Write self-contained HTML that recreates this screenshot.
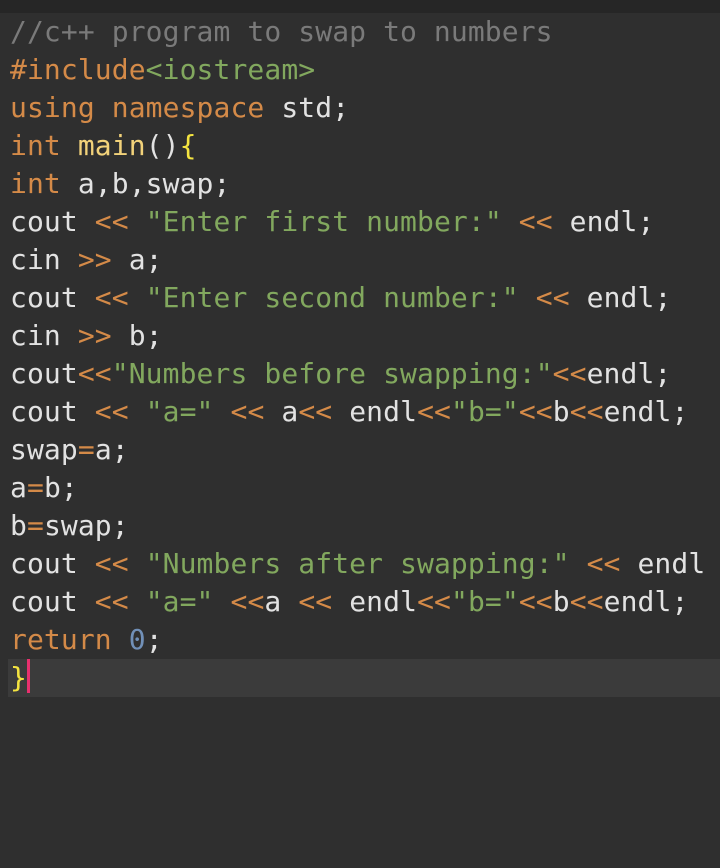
<!DOCTYPE html>
<html><head><style>
html,body{margin:0;padding:0;width:720px;height:868px;overflow:hidden;background:#2f2f2f}
.top{height:13px;background:#262626}
pre{margin:0;padding:0 0 0 10px;font-family:"DejaVu Sans Mono","Liberation Mono",monospace;font-size:28px;line-height:38px;letter-spacing:0.1px;color:#e2e2e2;white-space:pre;overflow:hidden;width:710px}
.l{display:block;height:38px}
.cur{background:#3b3b3b;margin-left:-2px;padding-left:2px}
.c{color:#7a7a7a}.k{color:#d48a48}.s{color:#82a85e}.f{color:#f2d27a}.n{color:#7190b8}.b{color:#f4e440}
.cursor{display:inline-block;width:3px;height:34px;background:#e8306e;vertical-align:-6px}
</style></head><body>
<div class="top"></div>
<pre><span class="l"><span class="c">//c++ program to swap to numbers</span></span><span class="l"><span class="k">#include</span><span class="s">&lt;iostream&gt;</span></span><span class="l"><span class="k">using namespace</span> std;</span><span class="l"><span class="k">int</span> <span class="f">main</span>()<span class="b">{</span></span><span class="l"><span class="k">int</span> a,b,swap;</span><span class="l">cout <span class="k">&lt;&lt;</span> <span class="s">"Enter first number:"</span> <span class="k">&lt;&lt;</span> endl;</span><span class="l">cin <span class="k">&gt;&gt;</span> a;</span><span class="l">cout <span class="k">&lt;&lt;</span> <span class="s">"Enter second number:"</span> <span class="k">&lt;&lt;</span> endl;</span><span class="l">cin <span class="k">&gt;&gt;</span> b;</span><span class="l">cout<span class="k">&lt;&lt;</span><span class="s">"Numbers before swapping:"</span><span class="k">&lt;&lt;</span>endl;</span><span class="l">cout <span class="k">&lt;&lt;</span> <span class="s">"a="</span> <span class="k">&lt;&lt;</span> a<span class="k">&lt;&lt;</span> endl<span class="k">&lt;&lt;</span><span class="s">"b="</span><span class="k">&lt;&lt;</span>b<span class="k">&lt;&lt;</span>endl;</span><span class="l">swap<span class="k">=</span>a;</span><span class="l">a<span class="k">=</span>b;</span><span class="l">b<span class="k">=</span>swap;</span><span class="l">cout <span class="k">&lt;&lt;</span> <span class="s">"Numbers after swapping:"</span> <span class="k">&lt;&lt;</span> endl</span><span class="l">cout <span class="k">&lt;&lt;</span> <span class="s">"a="</span> <span class="k">&lt;&lt;</span>a <span class="k">&lt;&lt;</span> endl<span class="k">&lt;&lt;</span><span class="s">"b="</span><span class="k">&lt;&lt;</span>b<span class="k">&lt;&lt;</span>endl;</span><span class="l"><span class="k">return</span> <span class="n">0</span>;</span><span class="l cur"><span class="b">}</span><span class="cursor"></span></span></pre>
</body></html>
